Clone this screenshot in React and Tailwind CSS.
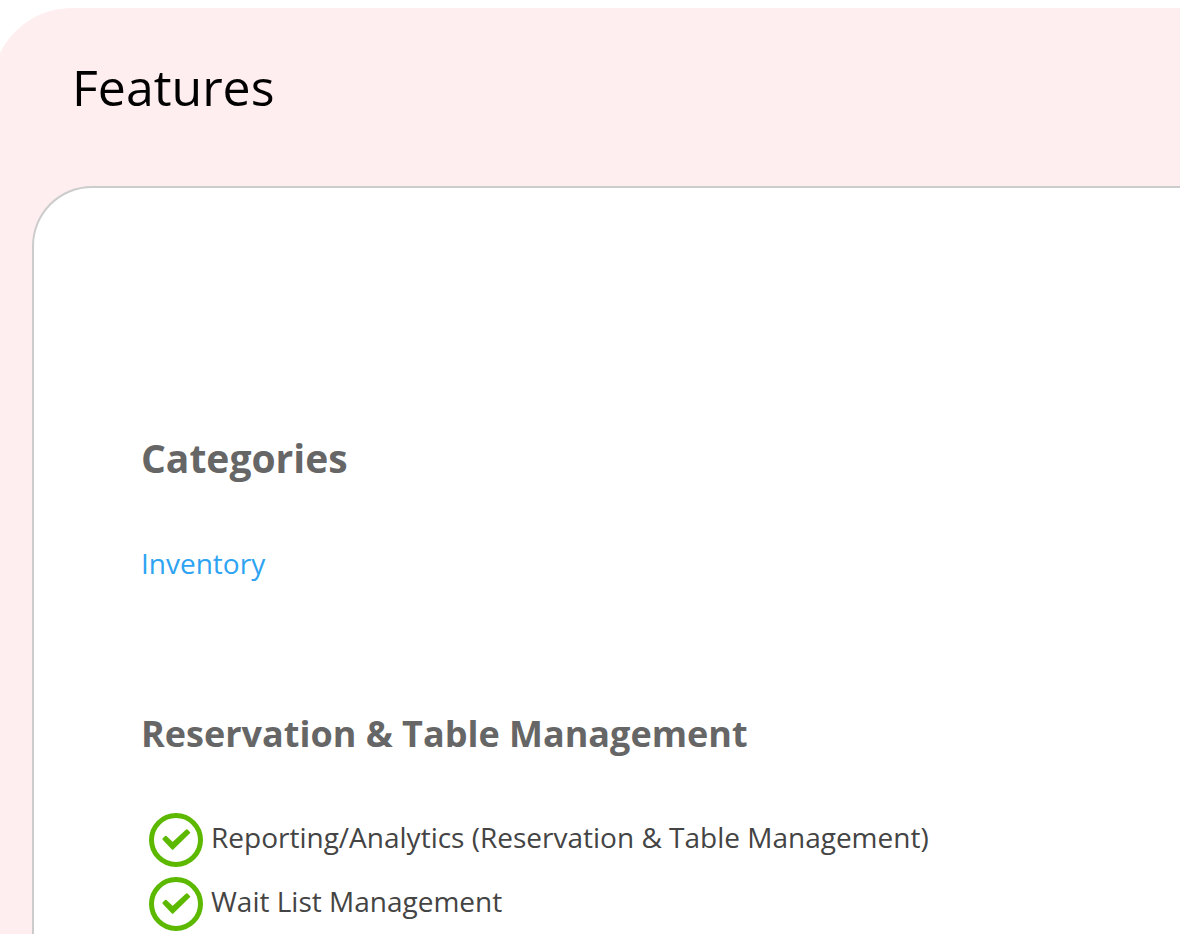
import React from "react";

const categories = [{ name: "Inventory", href: "#inventory" }];

const features = [
  "Reporting/Analytics (Reservation & Table Management)",
  "Wait List Management",
];

const CheckIcon = () => (
  <svg viewBox="0 0 54 54" className="size-[54px] shrink-0" fill="none" stroke="#5cb900" aria-hidden="true">
    <circle cx="27" cy="27" r="24.5" strokeWidth="5" />
    <path
      d="M14.4 26L16.8 23.8L23.6 30.2L37.8 17.2L40.2 19.6L23.6 35.7Z"
      fill="#5cb900"
      strokeWidth="2"
      strokeLinejoin="round"
    />
  </svg>
);

const App = () => {
  return (
    <div className="h-screen overflow-hidden bg-white pt-2 font-['Open_Sans',sans-serif]">
      {/* Features section */}
      <section className="-ml-2 min-h-full rounded-tl-[80px] bg-[#ffeeef] pt-11 pl-10">
        <h1 className="pl-10 text-[50px] leading-[70px] text-black">Features</h1>

        <div className="mt-16 min-h-screen rounded-tl-[60px] border-t-2 border-l-2 border-[#cccccc] bg-white pt-[240px] pl-[107px]">
          <h2 className="text-[39px] leading-[60px] font-bold text-[#666666]">Categories</h2>
          <ul className="mt-[52px] text-[28px] leading-[46px] text-[#2ea3f2]">
            {categories.map((category) => (
              <li key={category.name}>
                <a href={category.href}>{category.name}</a>
              </li>
            ))}
          </ul>

          {/* Feature list */}
          <h2 className="mt-[118px] text-[36px] leading-[60px] font-bold text-[#666666]">
            Reservation &amp; Table Management
          </h2>
          <ul className="mt-11 pl-2 text-[28px] leading-[42px] text-[#444444]">
            {features.map((feature) => (
              <li key={feature} className="flex h-16 items-center gap-2">
                <CheckIcon />
                <span className="pb-[6px]">{feature}</span>
              </li>
            ))}
          </ul>
        </div>
      </section>
    </div>
  );
};

export default App;
